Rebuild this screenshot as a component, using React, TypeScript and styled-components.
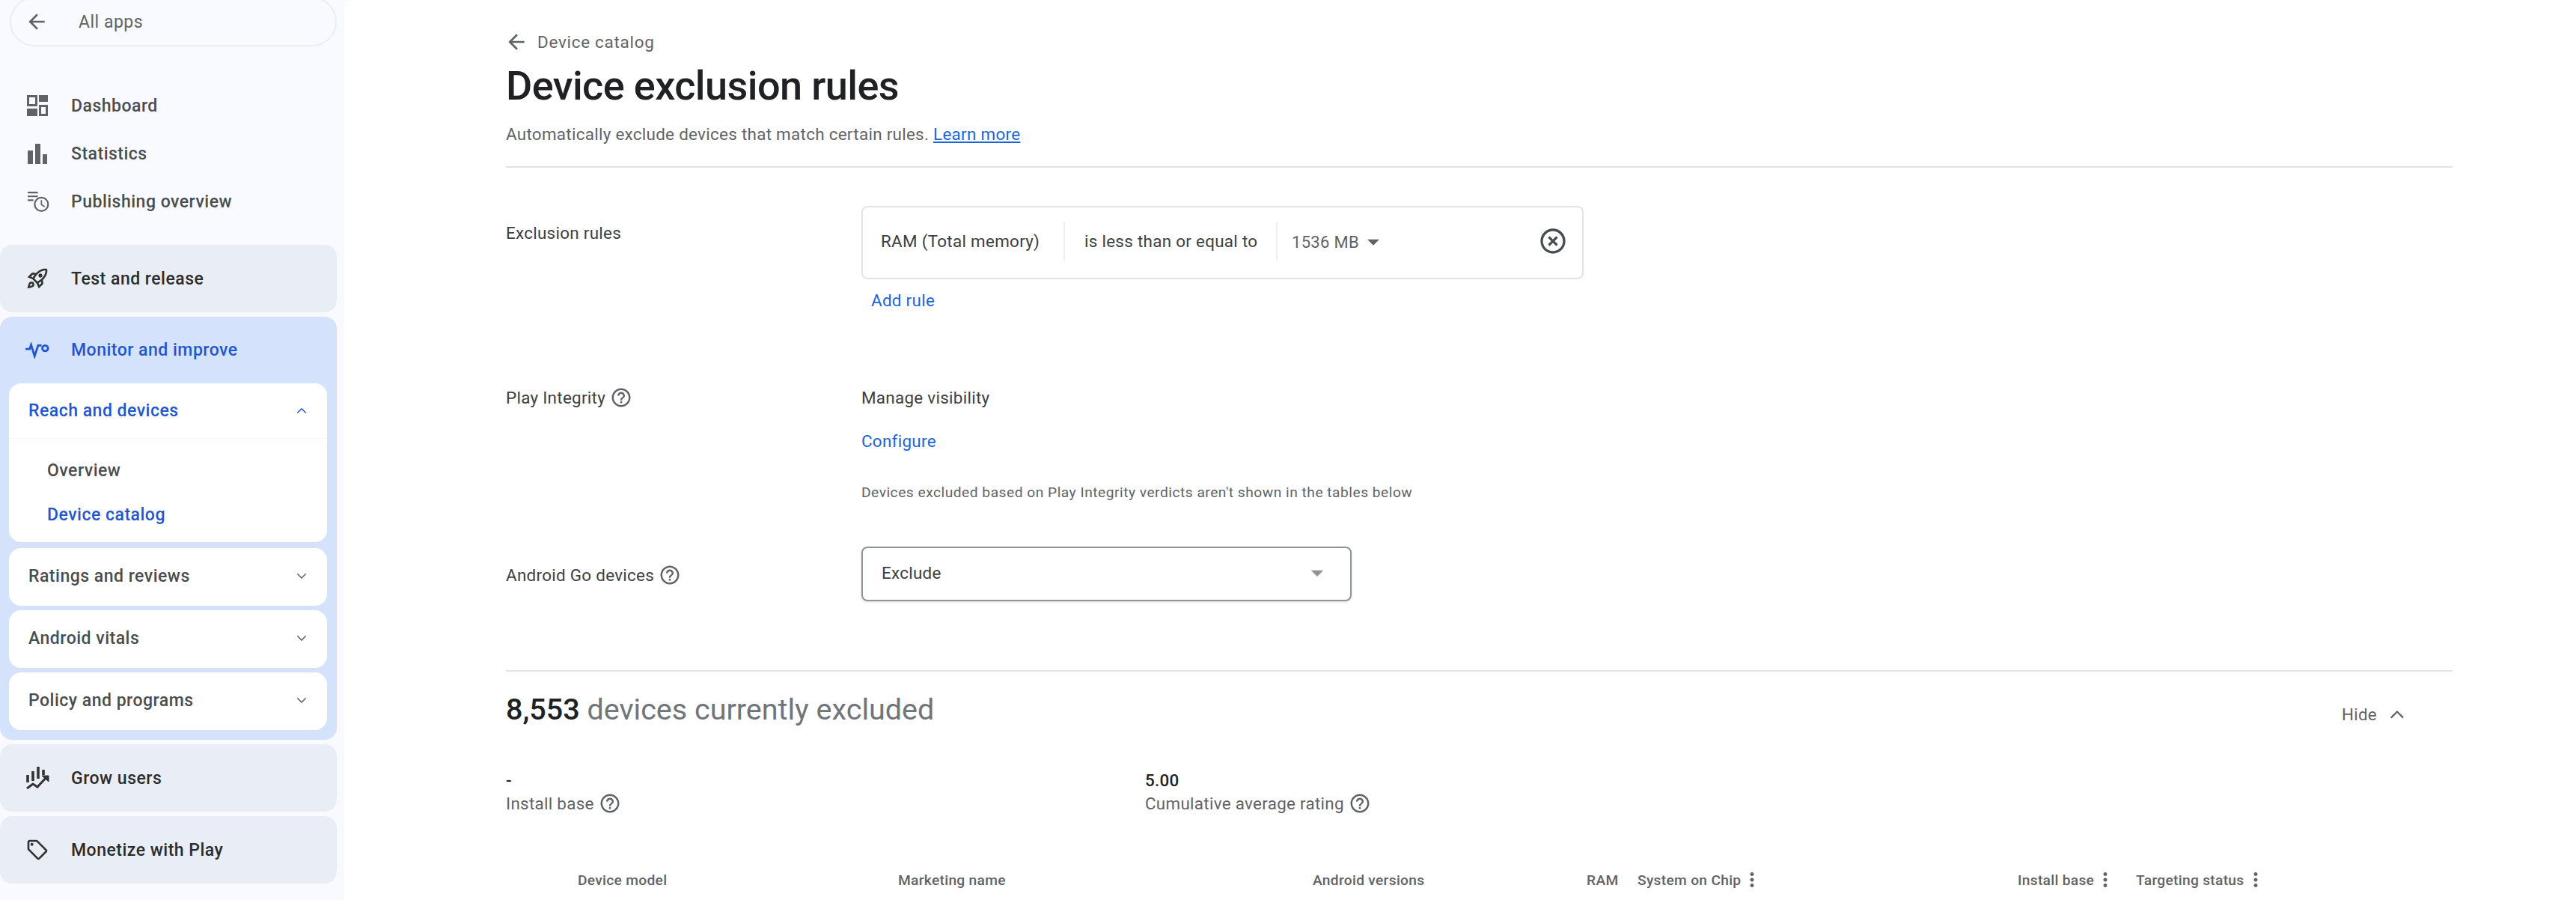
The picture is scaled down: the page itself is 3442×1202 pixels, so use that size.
import React from "react";
import styled, { createGlobalStyle } from "styled-components";
import {
  MdArrowBack,
  MdArrowDropDown,
  MdHelpOutline,
  MdHighlightOff,
  MdMoreVert,
  MdOutlineLocalOffer,
  MdOutlineRocketLaunch,
} from "react-icons/md";

const GlobalStyle = createGlobalStyle`
  html, body {
    margin: 0;
    padding: 0;
    background: #f8faff;
  }
  body {
    font-family: Roboto, "Liberation Sans", sans-serif;
    color: #3c4043;
  }
  * {
    box-sizing: border-box;
  }
`;

const Page = styled.div`
  display: grid;
  grid-template-columns: 460px 1fr;
  width: 3442px;
  height: 1202px;
  overflow: hidden;
`;

const Sidebar = styled.nav`
  display: flex;
  flex-direction: column;
  font-size: 23px;
  font-weight: 500;
  letter-spacing: 0.5px;
`;

const AllApps = styled.div`
  display: flex;
  align-items: center;
  width: 437px;
  height: 66px;
  margin: -4px 0 0 13px;
  padding-left: 18px;
  gap: 40px;
  border: 2px solid #e9eef6;
  border-radius: 38px;
  color: #5f6368;
  font-weight: 400;
`;

const PlainList = styled.div`
  display: flex;
  flex-direction: column;
  margin-top: 47px;
`;

const PlainRow = styled.div`
  display: flex;
  align-items: center;
  height: 64px;
  padding-left: 34px;
  gap: 29px;
  color: #4a4d50;
`;

const IconSlot = styled.span`
  display: flex;
  align-items: center;
  justify-content: center;
  width: 32px;
  height: 32px;
  flex: none;
`;

const Sections = styled.div`
  display: flex;
  flex-direction: column;
  gap: 6px;
  width: 450px;
  margin-top: 26px;
`;

const SectionHead = styled.div<{ $active?: boolean }>`
  display: flex;
  align-items: center;
  height: ${(p) => (p.$active ? "89px" : "90px")};
  padding-left: 34px;
  gap: 29px;
  border-radius: 16px;
  background: ${(p) => (p.$active ? "transparent" : "#e9eef6")};
  color: ${(p) => (p.$active ? "#1f57d0" : "#2b2c2e")};
`;

const ActiveSection = styled.div`
  display: flex;
  flex-direction: column;
  gap: 6px;
  padding: 0 13px 13px 12px;
  border-radius: 16px;
  background: #d5e2fb;
`;

const ActiveHead = styled(SectionHead)`
  margin: 0 -13px -6px -12px;
`;

const SubCard = styled.div<{ $gap?: boolean }>`
  border-radius: 16px;
  background: #fff;
  margin-bottom: ${(p) => (p.$gap ? "2px" : "0")};
`;

const SubHead = styled.div<{ $active?: boolean }>`
  display: flex;
  align-items: center;
  justify-content: space-between;
  height: ${(p) => (p.$active ? "74px" : "77px")};
  padding: 0 27px ${(p) => (p.$active ? "0" : "3px")} 26px;
  color: ${(p) => (p.$active ? "#1f57d0" : "#4a4d50")};
  border-bottom: ${(p) => (p.$active ? "1px solid #f6f7f8" : "none")};
`;

const SubList = styled.div`
  display: flex;
  flex-direction: column;
  padding: 13px 0 7px 51px;
`;

const SubItem = styled.div<{ $active?: boolean }>`
  display: flex;
  align-items: center;
  height: 59px;
  color: ${(p) => (p.$active ? "#1f57d0" : "#4a4d50")};
`;

const Main = styled.main`
  padding: 36px 165px 0 216px;
  background: #fff;
  border-top-left-radius: 12px;
  font-size: 22.4px;
  letter-spacing: 0.3px;
`;

const BackRow = styled.div`
  display: flex;
  align-items: center;
  height: 40px;
  margin-left: -2px;
  gap: 12px;
  color: #5f6368;
  letter-spacing: 0.75px;
`;

const Title = styled.h1`
  height: 64px;
  margin: 7px 0 0;
  color: #202124;
  font-size: 54px;
  font-weight: 500;
  line-height: 64px;
  letter-spacing: -0.58px;
`;

const Subtitle = styled.p`
  margin: 16px 0 0;
  color: #5f6368;
  line-height: 32px;
`;

const Link = styled.a`
  color: #1a66d8;
  text-decoration: underline;
`;

const Rule = styled.hr<{ $top: number }>`
  height: 2px;
  margin: ${(p) => p.$top}px 0 0;
  border: 0;
  background: #e2e4e8;
`;

const FormRow = styled.div<{ $top: number }>`
  display: grid;
  grid-template-columns: 475px 1fr;
  margin-top: ${(p) => p.$top}px;
`;

const FieldLabel = styled.div<{ $pad?: number }>`
  display: flex;
  align-items: center;
  align-self: start;
  gap: 6px;
  height: 30px;
  margin-top: ${(p) => p.$pad ?? 0}px;
  line-height: 30px;
  color: #3c4043;
`;

const RuleCard = styled.div`
  display: flex;
  align-items: center;
  width: 965px;
  height: 98px;
  padding: 0 19px 4px 24px;
  border: 2px solid #e2e4e8;
  border-radius: 8px;
`;

const RuleCell = styled.div<{ $w: number; $pad?: number }>`
  display: flex;
  align-items: center;
  width: ${(p) => p.$w}px;
  height: 51px;
  padding-left: ${(p) => p.$pad ?? 0}px;
  border-right: 2px solid #eceef0;
`;

const ValuePick = styled.div`
  display: flex;
  flex: 1;
  align-items: center;
  gap: 0;
  padding: 2px 0 0 19px;
  color: #5f6368;
  font-size: 22px;
`;

const TextLink = styled.div<{ $top?: number; $left?: number }>`
  height: 30px;
  margin: ${(p) => p.$top ?? 0}px 0 0 ${(p) => p.$left ?? 0}px;
  color: #1a66d8;
  line-height: 30px;
`;

const PlainText = styled.div`
  height: 30px;
  line-height: 30px;
  color: #3c4043;
`;

const Note = styled.div`
  height: 26px;
  margin-top: 41px;
  color: #5f6368;
  font-size: 19.2px;
  line-height: 26px;
  letter-spacing: 0.5px;
`;

const SelectBox = styled.div`
  display: flex;
  align-items: center;
  justify-content: space-between;
  width: 655px;
  height: 73px;
  padding: 0 24px 3px 25px;
  border: 2px solid #8f9498;
  border-radius: 8px;
  box-shadow: 0 1px 3px rgba(60, 64, 67, 0.2);
`;

const SummaryRow = styled.div`
  display: flex;
  align-items: center;
  justify-content: space-between;
  height: 48px;
  margin-top: 27px;
`;

const Summary = styled.div`
  color: #70757a;
  font-size: 39.5px;
  line-height: 48px;
  letter-spacing: 0;
`;

const SummaryCount = styled.strong`
  color: #202124;
  font-weight: 500;
`;

const HideToggle = styled.div`
  display: flex;
  align-items: center;
  gap: 17px;
  margin: 12px 64px 0 0;
  color: #5f6368;
`;

const Stats = styled.div`
  display: grid;
  grid-template-columns: 854px 1fr;
  margin-top: 54px;
`;

const StatValue = styled.div`
  height: 32px;
  color: #202124;
  font-weight: 500;
  line-height: 32px;
`;

const StatLabel = styled.div`
  display: flex;
  align-items: center;
  gap: 6px;
  height: 30px;
  color: #5f6368;
`;

const TableHead = styled.div`
  display: grid;
  grid-template-columns: 428px 554px 366px 68px 508px 158px 1fr;
  height: 30px;
  margin-top: 72px;
  padding-left: 96px;
  color: #5f6368;
  font-size: 19.2px;
  font-weight: 500;
`;

const HeadCell = styled.div`
  display: flex;
  align-items: center;
  gap: 0;
`;

const Chevron = ({ up, color, width = 16 }: { up?: boolean; color: string; width?: number }) => (
  <svg width={width} height={(width * 10) / 16} viewBox="0 0 16 10" fill="none">
    <path d={up ? "M1.500 8.500L8 2l6.500 6.500" : "M1.500 1.500L8 8l6.500-6.500"} stroke={color} strokeWidth="1.800" />
  </svg>
);

const DashboardIcon = () => (
  <svg width="28" height="28" viewBox="0 0 28 28" fill="#5f6368">
    <path
      fillRule="evenodd"
      d="M0 0h14v15H0zM3 3v9h8V3zM16 0h12v9H16zM0 18h14v10H0zM16 13h12v15H16zM19 16v9h6v-9z"
    />
  </svg>
);

const StatsIcon = () => (
  <svg width="28" height="27" viewBox="0 0 28 27" fill="#5f6368">
    <path d="M1 9h7v18H1zM11 0h7v27h-7zM21 14h6v13h-6z" />
  </svg>
);

const PublishingIcon = () => (
  <svg width="34" height="33" viewBox="0 0 34 33" fill="none" stroke="#5f6368" style={{ marginLeft: 3 }}>
    <path d="M0 2h16M0 8h16M0 14h9" strokeWidth="2.400" />
    <circle cx="21.500" cy="20.500" r="10.500" strokeWidth="2.600" />
    <path d="M21.500 14v7l5 3" strokeWidth="2" />
  </svg>
);

const MonitorIcon = () => (
  <svg width="34" height="22" viewBox="0 0 34 22" fill="none" stroke="#1f57d0" strokeWidth="3">
    <path d="M0 9h6l2-6 5 16 5-15h5" />
    <circle cx="28" cy="8" r="4" />
  </svg>
);

const GrowIcon = () => (
  <svg width="32" height="32" viewBox="0 0 32 32" fill="none" stroke="#333">
    <path d="M3 12v10M10 7v13M17 1v16M24 5v7" strokeWidth="3.600" />
    <path d="M2 30l8-6 6 4 13-14" strokeWidth="3" />
    <path d="M22 13h9v8z" fill="#333" strokeWidth="1" />
  </svg>
);

const Help = () => <MdHelpOutline size={30} color="#5f6368" />;

const subSections = ["Ratings and reviews", "Android vitals", "Policy and programs"];

export default function App() {
  return (
    <Page>
      <GlobalStyle />
      <Sidebar>
        <AllApps>
          <MdArrowBack size={32} color="#5f6368" />
          All apps
        </AllApps>
        <PlainList>
          <PlainRow>
            <IconSlot>
              <DashboardIcon />
            </IconSlot>
            Dashboard
          </PlainRow>
          <PlainRow>
            <IconSlot>
              <StatsIcon />
            </IconSlot>
            Statistics
          </PlainRow>
          <PlainRow>
            <IconSlot>
              <PublishingIcon />
            </IconSlot>
            Publishing overview
          </PlainRow>
        </PlainList>
        <Sections>
          <SectionHead>
            <IconSlot>
              <MdOutlineRocketLaunch size={38} color="#333" />
            </IconSlot>
            Test and release
          </SectionHead>
          <ActiveSection>
            <ActiveHead $active>
              <IconSlot>
                <MonitorIcon />
              </IconSlot>
              Monitor and improve
            </ActiveHead>
            <SubCard $gap>
              <SubHead $active>
                Reach and devices
                <Chevron up color="#1f57d0" width={14} />
              </SubHead>
              <SubList>
                <SubItem>Overview</SubItem>
                <SubItem $active>Device catalog</SubItem>
              </SubList>
            </SubCard>
            {subSections.map((name) => (
              <SubCard key={name}>
                <SubHead>
                  {name}
                  <Chevron color="#5f6368" width={14} />
                </SubHead>
              </SubCard>
            ))}
          </ActiveSection>
          <SectionHead>
            <IconSlot>
              <GrowIcon />
            </IconSlot>
            Grow users
          </SectionHead>
          <SectionHead>
            <IconSlot>
              <MdOutlineLocalOffer size={38} color="#333" />
            </IconSlot>
            Monetize with Play
          </SectionHead>
        </Sections>
      </Sidebar>
      <Main>
        <BackRow>
          <MdArrowBack size={32} color="#5f6368" />
          Device catalog
        </BackRow>
        <Title>Device exclusion rules</Title>
        <Subtitle>
          Automatically exclude devices that match certain rules. <Link>Learn more</Link>
        </Subtitle>
        <Rule $top={27} />
        <FormRow $top={51}>
          <FieldLabel $pad={21}>Exclusion rules</FieldLabel>
          <div>
            <RuleCard>
              <RuleCell $w={246}>RAM (Total memory)</RuleCell>
              <RuleCell $w={284} $pad={26}>
                is less than or equal to
              </RuleCell>
              <ValuePick>
                1536 MB
                <MdArrowDropDown size={38} color="#5f6368" />
              </ValuePick>
              <MdHighlightOff size={40} color="#4a4d50" />
            </RuleCard>
            <TextLink $top={13} $left={13}>
              Add rule
            </TextLink>
          </div>
        </FormRow>
        <FormRow $top={100}>
          <FieldLabel>
            Play Integrity
            <Help />
          </FieldLabel>
          <div>
            <PlainText>Manage visibility</PlainText>
            <TextLink $top={28}>Configure</TextLink>
            <Note>Devices excluded based on Play Integrity verdicts aren't shown in the tables below</Note>
          </div>
        </FormRow>
        <FormRow $top={59}>
          <FieldLabel $pad={23}>
            Android Go devices
            <Help />
          </FieldLabel>
          <SelectBox>
            Exclude
            <MdArrowDropDown size={40} color="#8f9498" />
          </SelectBox>
        </FormRow>
        <Rule $top={92} />
        <SummaryRow>
          <Summary>
            <SummaryCount>8,553</SummaryCount> devices currently excluded
          </Summary>
          <HideToggle>
            Hide
            <Chevron up color="#5f6368" width={20} />
          </HideToggle>
        </SummaryRow>
        <Stats>
          <div>
            <StatValue>-</StatValue>
            <StatLabel>
              Install base
              <Help />
            </StatLabel>
          </div>
          <div>
            <StatValue>5.00</StatValue>
            <StatLabel>
              Cumulative average rating
              <Help />
            </StatLabel>
          </div>
        </Stats>
        <TableHead>
          <HeadCell>Device model</HeadCell>
          <HeadCell>Marketing name</HeadCell>
          <HeadCell>Android versions</HeadCell>
          <HeadCell>RAM</HeadCell>
          <HeadCell>
            System on Chip
            <MdMoreVert size={30} />
          </HeadCell>
          <HeadCell>
            Install base
            <MdMoreVert size={30} />
          </HeadCell>
          <HeadCell>
            Targeting status
            <MdMoreVert size={30} />
          </HeadCell>
        </TableHead>
      </Main>
    </Page>
  );
}
